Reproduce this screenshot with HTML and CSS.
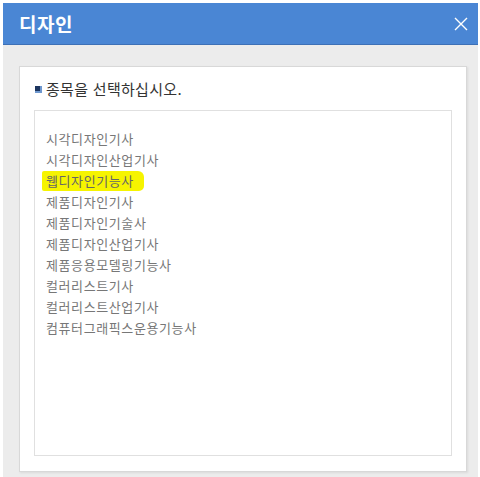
FILE: index.html
```html
<!DOCTYPE html>
<html lang="ko">
<head>
    <meta charset="UTF-8">
    <meta name="viewport" content="width=device-width, initial-scale=1.0">
    <title>디자인</title>
    <link rel="stylesheet" href="styles.css">
</head>
<body>
    <div class="window">
        <div class="header">
            <h1>디자인</h1>
            <button class="close" aria-label="닫기">
                <svg width="14" height="14" viewBox="0 0 14 14">
                    <path d="M1 1 L13 13 M13 1 L1 13" stroke="#fff" stroke-width="1.4" fill="none"/>
                </svg>
            </button>
        </div>
        <div class="content">
            <div class="panel">
                <div class="title"><span class="bullet"></span>종목을 선택하십시오.</div>
                <ul class="list">
                    <li>시각디자인기사</li>
                    <li>시각디자인산업기사</li>
                    <li><span class="mark">웹디자인기능사</span></li>
                    <li>제품디자인기사</li>
                    <li>제품디자인기술사</li>
                    <li>제품디자인산업기사</li>
                    <li>제품응용모델링기능사</li>
                    <li>컬러리스트기사</li>
                    <li>컬러리스트산업기사</li>
                    <li>컴퓨터그래픽스운용기능사</li>
                </ul>
            </div>
        </div>
    </div>
</body>
</html>
```

FILE: styles.css
```css
body {
    margin: 0;
    padding: 0;
    background-color: #fff;
    font-family: "Noto Sans CJK KR", "Noto Sans", sans-serif;
}
.window {
    margin: 3px 2px 0 3px;
    height: 474px;
    display: flex;
    flex-direction: column;
    background-color: #ececec;
}
.header {
    height: 41px;
    flex-shrink: 0;
    display: flex;
    align-items: center;
    justify-content: space-between;
    padding: 0 10px 0 16px;
    background-color: #4a86d4;
    border-bottom: 1px solid #3d70b6;
}
.header h1 {
    margin: 0;
    font-size: 19px;
    font-weight: bold;
    color: #fff;
    line-height: 1;
    letter-spacing: 0.5px;
}
.close {
    background: none;
    border: none;
    padding: 0;
    width: 14px;
    height: 14px;
    cursor: pointer;
}
.content {
    flex: 1;
    display: flex;
    padding: 21px 11px 5px 16px;
}
.panel {
    flex: 1;
    display: flex;
    flex-direction: column;
    background-color: #fff;
    border: 1px solid #d8d8d8;
    box-shadow: 1px 1px 2px rgba(0,0,0,0.08);
    padding: 0 14px 15px 14px;
}
.title {
    display: flex;
    align-items: center;
    height: 43px;
    font-size: 15px;
    color: #333;
    letter-spacing: 0.3px;
}
.bullet {
    width: 7px;
    height: 7px;
    margin: 2px 4px 0 1px;
    background-color: #1c355f;
    box-shadow: inset -2px -2px 0 #6f98cf;
}
.list {
    flex: 1;
    list-style: none;
    margin: 0;
    padding: 17px 11px;
    border: 1px solid #e0e0e0;
    font-size: 13px;
    line-height: 21px;
    color: #777;
    letter-spacing: 0.6px;
}
.mark {
    display: inline-block;
    margin-left: -4px;
    padding: 0 10px 0 4px;
    line-height: 20px;
    background-color: #f6f400;
    border-radius: 2px 6px 5px 2px;
    color: #666;
}
```
